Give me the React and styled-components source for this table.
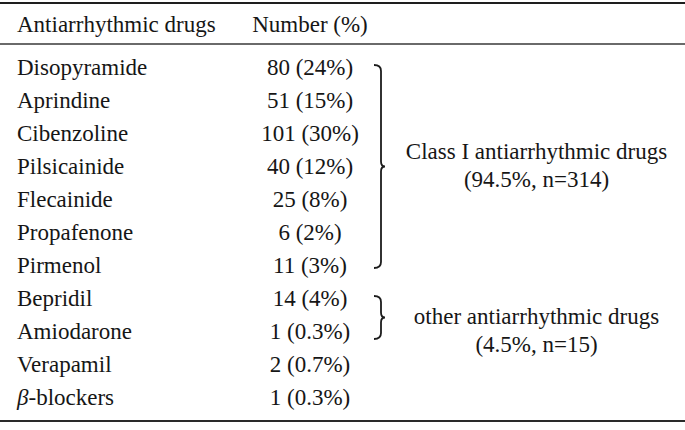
import React from 'react'
import styled, { createGlobalStyle } from 'styled-components'

const GlobalStyle = createGlobalStyle`
  html, body {
    margin: 0;
    padding: 0;
    background: #ffffff;
  }
  body {
    font-family: "Liberation Serif", "Times New Roman", serif;
    color: #161616;
  }
`

const Table = styled.div`
  margin-top: 2px;
  width: 685px;
  border-top: 2px solid #1e1e1e;
  border-bottom: 2px solid #2a2a2a;
  font-size: 23px;
`

const Grid = styled.div`
  display: grid;
  grid-template-columns: 228px 130px 11px 1fr;
  grid-auto-rows: 33px;
  padding-left: 17px;
  line-height: 33px;
`

const Head = styled(Grid)`
  padding-top: 3.5px;
  padding-bottom: 2.5px;
  border-bottom: 2px solid #6a6a6a;
`

const Body = styled(Grid)`
  padding-top: 5.5px;
  padding-bottom: 6px;
`

const Cell = styled.div`
  grid-column: ${(p) => p.$col};
  grid-row: ${(p) => p.$row};
  text-align: ${(p) => (p.$center ? 'center' : 'left')};
  white-space: nowrap;
`

const BraceCell = styled.div`
  grid-column: 3;
  grid-row: ${(p) => p.$row} / span ${(p) => p.$span};
  margin-left: -2px;
  padding-top: 13.5px;
  line-height: 0;
`

const Label = styled.div`
  grid-column: 4;
  grid-row: ${(p) => p.$row} / span ${(p) => p.$span};
  align-self: center;
  padding-left: 2px;
  text-align: center;
  line-height: 28.5px;
`

const Beta = styled.i`
  font-style: italic;
`

const drugs = [
  ['Disopyramide', '80 (24%)'],
  ['Aprindine', '51 (15%)'],
  ['Cibenzoline', '101 (30%)'],
  ['Pilsicainide', '40 (12%)'],
  ['Flecainide', '25 (8%)'],
  ['Propafenone', '6 (2%)'],
  ['Pirmenol', '11 (3%)'],
  ['Bepridil', '14 (4%)'],
  ['Amiodarone', '1 (0.3%)'],
  ['Verapamil', '2 (0.7%)'],
  ['-blockers', '1 (0.3%)', true],
]

const groups = [
  { from: 1, span: 7, brace: 205, labelSpan: 7, lines: ['Class I antiarrhythmic drugs', '(94.5%, n=314)'] },
  { from: 8, span: 2, brace: 45, labelSpan: 3, lines: ['other antiarrhythmic drugs', '(4.5%, n=15)'] },
]

function Brace({ h }) {
  const m = h / 2
  const d = `M1 1 Q8 1 8 7 L8 ${m - 5} Q8 ${m} 12 ${m} Q8 ${m} 8 ${m + 5} L8 ${h - 7} Q8 ${h - 1} 1 ${h - 1}`
  return (
    <svg width="13" height={h} viewBox={`0 0 13 ${h}`}>
      <path d={d} fill="none" stroke="#1c1c1c" strokeWidth="1.8" />
    </svg>
  )
}

export default function App() {
  return (
    <>
      <GlobalStyle />
      <Table>
        <Head>
          <Cell $col={1} $row={1}>Antiarrhythmic drugs</Cell>
          <Cell $col={2} $row={1} $center>Number (%)</Cell>
        </Head>
        <Body>
          {drugs.map(([name, num, beta], i) => (
            <React.Fragment key={i}>
              <Cell $col={1} $row={i + 1}>
                {beta && <Beta>β</Beta>}
                {name}
              </Cell>
              <Cell $col={2} $row={i + 1} $center>{num}</Cell>
            </React.Fragment>
          ))}
          {groups.map((g) => (
            <React.Fragment key={g.from}>
              <BraceCell $row={g.from} $span={g.span}>
                <Brace h={g.brace} />
              </BraceCell>
              <Label $row={g.from} $span={g.labelSpan}>
                {g.lines.map((l) => (
                  <div key={l}>{l}</div>
                ))}
              </Label>
            </React.Fragment>
          ))}
        </Body>
      </Table>
    </>
  )
}
